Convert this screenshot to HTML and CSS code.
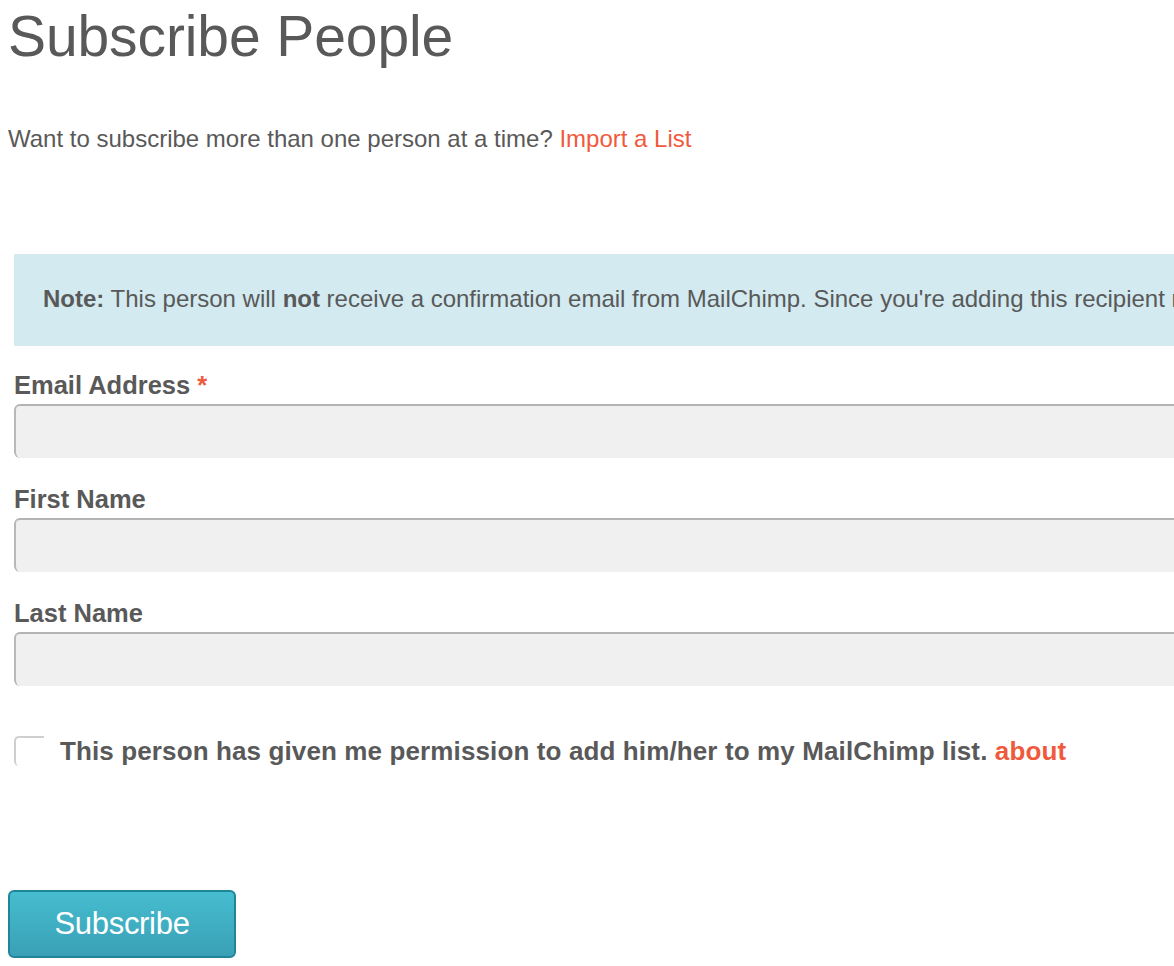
FILE: index.html
```html
<!DOCTYPE html>
<html>
<head>
<meta charset="utf-8">
<link rel="stylesheet" href="styles.css">
</head>
<body>
<h1 class="title">Subscribe People</h1>
<p class="intro">Want to subscribe more than one person at a time? <a class="link" href="#">Import a List</a></p>
<form class="form">
  <div class="note"><b>Note:</b> This person will <b>not</b> receive a confirmation email from MailChimp. Since you're adding this recipient manually, they won't have an opt-in IP address or date in your records, so be extra sure you have permission.</div>
  <div class="field field-first">
    <label class="label">Email Address <span class="req">*</span></label>
    <div class="input"></div>
  </div>
  <div class="field">
    <label class="label">First Name</label>
    <div class="input"></div>
  </div>
  <div class="field">
    <label class="label">Last Name</label>
    <div class="input"></div>
  </div>
  <div class="check-row">
    <span class="checkbox"></span>
    <span class="check-text">This person has given me permission to add him/her to my MailChimp list. <a class="link" href="#">about</a></span>
  </div>
  <button class="btn" type="button">Subscribe</button>
</form>
</body>
</html>
```
FILE: styles.css
```css
html, body { overflow: hidden; }
body {
  margin: 8px;
  width: 1400px;
  font-family: "Liberation Sans", Arial, sans-serif;
  color: #595959;
}
.title {
  font-weight: normal;
  font-size: 57px;
  line-height: 60px;
  margin: -2px 0 0 0;
  letter-spacing: -0.1px;
  color: #595959;
}
.intro {
  font-size: 24px;
  margin: 58px 0 0 0;
  line-height: 30px;
}
.link { color: #f05a3c; text-decoration: none; }
.form { margin: 100px 0 0 6px; }
.note {
  background: #d2eaf0;
  height: 92px;
  box-sizing: border-box;
  padding: 30px 0 0 29px;
  white-space: nowrap;
  overflow: hidden;
  font-size: 24px;
  line-height: 30px;
}
.note b { font-weight: bold; }
.field { display: flex; flex-direction: column; }
.label {
  font-weight: bold;
  font-size: 25.5px;
  line-height: 30px;
  margin-top: 26px;
  height: 34px;
}
.field-first .label { margin-top: 24px; }
.req { color: #f05a3c; }
.input {
  height: 54px;
  box-sizing: border-box;
  background: #f0f0f0;
  border-top: 2px solid #b3b3b3;
  border-left: 2px solid #b8b8b8;
  border-radius: 6px 0 0 6px;
}
.check-row {
  display: flex;
  align-items: center;
  gap: 16px;
  margin-top: 50px;
}
.checkbox {
  width: 30px;
  height: 30px;
  flex: none;
  box-sizing: border-box;
  border-top: 2px solid #cfcfcf;
  border-left: 2px solid #cfcfcf;
  border-radius: 5px 0 0 5px;
  background: #fff;
}
.check-text {
  font-weight: bold;
  font-size: 26px;
  line-height: 30px;
  letter-spacing: 0.12px;
}
.btn {
  display: block;
  margin: 124px 0 0 -6px;
  width: 228px;
  height: 68px;
  border: 2px solid #1f8598;
  border-radius: 6px;
  background: linear-gradient(#46bdcf, #3aa0b6);
  color: #fff;
  font-family: "Liberation Sans", Arial, sans-serif;
  font-size: 31px;
  letter-spacing: -0.3px;
  padding: 0;
}
```
